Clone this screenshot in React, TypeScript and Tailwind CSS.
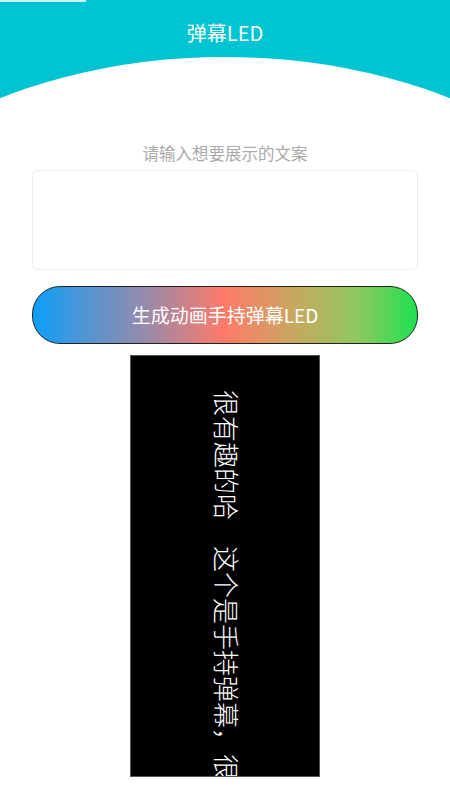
import React, { useState } from "react";

const FONT = '"Noto Sans CJK SC", "Noto Sans", Roboto, sans-serif';

export default function App() {
  const [text, setText] = useState("");
  const marquee = "很有趣的哈\u3000这个是手持弹幕，很有趣的哈";

  return (
    <div className="min-h-[800px] w-[450px] bg-white" style={{ fontFamily: FONT }}>
      {/* Header with curved bottom */}
      <div className="relative h-[100px] overflow-hidden bg-[#00c4d2]">
        <div className="absolute left-0 top-0 h-[2px] w-[86px] bg-white/80" />
        <h1 className="relative z-10 pt-[20px] text-center text-[20px] leading-[26px] font-normal text-white">
          弹幕LED
        </h1>
        <div className="absolute left-[-195px] top-[57px] h-[530px] w-[840px] rounded-[50%] bg-white" />
      </div>

      <div className="flex flex-col items-center px-[32px]">
        <p className="mt-[41px] text-[16.5px] leading-[24px] text-[#aaaaaa]">请输入想要展示的文案</p>

        <textarea
          value={text}
          onChange={(e) => setText(e.target.value)}
          className="mt-[5px] h-[100px] w-full resize-none rounded-[6px] border border-[#eeeeee] p-2 text-[15px] outline-none"
        />

        <button className="mt-[16px] flex h-[58px] w-[386px] items-center justify-center rounded-[28px] border-[1.5px] border-[#222222] bg-[linear-gradient(90deg,#0a9ff8_0%,#4a96d8_12%,#9a8aa8_30%,#ff7a68_50%,#c8a860_68%,#8cc860_85%,#1ee24e_100%)] text-[19px] text-white">
          生成动画手持弹幕LED
        </button>

        {/* LED preview */}
        <div className="mt-[11px] flex h-[422px] w-[190px] justify-center overflow-hidden border border-[#555555] bg-black pt-[34px] pl-[4px]">
          <div className="whitespace-nowrap text-[26px] leading-[28px] font-light text-white [writing-mode:vertical-rl] [text-orientation:sideways]">
            {marquee}
          </div>
        </div>
      </div>
    </div>
  );
}
